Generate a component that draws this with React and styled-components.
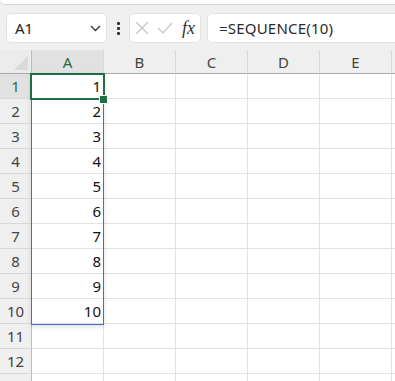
import styled, { createGlobalStyle } from 'styled-components'

const GlobalStyle = createGlobalStyle`
  html, body {
    margin: 0;
    background: #f0f0f0;
    font-family: "Noto Sans", "Noto Sans CJK JP", sans-serif;
    overflow: hidden;
  }
  * { box-sizing: border-box; }
`

const Page = styled.div`
  width: 395px;
  height: 381px;
  overflow: hidden;
  background: #f0f0f0;
`

const Ribbon = styled.div`
  height: 5px;
  background: #fff;
  border-bottom: 1px solid #d4d4d4;
  border-bottom-left-radius: 8px;
`

const FormulaBar = styled.div`
  display: flex;
  align-items: center;
  height: 30px;
  margin: 8px 0 7px 6px;
`

const Box = styled.div`
  height: 30px;
  background: #fff;
  border: 1px solid #e2e2e2;
  border-radius: 5px;
  display: flex;
  align-items: center;
`

const NameBox = styled(Box)`
  width: 101px;
  padding: 0 0 0 8px;
  justify-content: space-between;
  font-size: 15px;
  color: #222;
`

const Chevron = styled.svg`
  margin-right: 5px;
`

const Dots = styled.div`
  width: 22px;
  display: flex;
  flex-direction: column;
  align-items: center;
  gap: 2px;
  span {
    width: 3px;
    height: 3px;
    background: #333;
    border-radius: 1px;
  }
`

const FxBox = styled(Box)`
  width: 72px;
  padding-left: 5px;
  gap: 8px;
`

const Fx = styled.span`
  font-family: "Liberation Serif", serif;
  font-style: italic;
  font-size: 18px;
  color: #333;
  margin-left: 1px;
`

const FormulaInput = styled(Box)`
  flex: 1;
  margin-left: 6px;
  padding-left: 11px;
  border-right: none;
  border-top-right-radius: 0;
  border-bottom-right-radius: 0;
  font-size: 15px;
  color: #2b2b2b;
  letter-spacing: 0.2px;
`

const SheetWrap = styled.div`
  position: relative;
`

const Sheet = styled.div`
  display: grid;
  grid-template-columns: 32px repeat(6, 72px);
  grid-template-rows: 24px repeat(13, 25px);
  background: #fff;
`

const Corner = styled.div`
  background: #ececec;
  border-right: 1px solid #bdbdbd;
  border-bottom: 1px solid #a9a9a9;
  position: relative;
  &::after {
    content: "";
    position: absolute;
    right: 3px;
    bottom: 3px;
    border-left: 14px solid transparent;
    border-bottom: 14px solid #d9d9d9;
  }
`

const ColHead = styled.div`
  background: ${p => (p.$active ? '#e1e1e1' : '#efefef')};
  color: ${p => (p.$active ? '#1d6b40' : '#444')};
  border-right: 1px solid #d8d8d8;
  border-bottom: 1px solid #a9a9a9;
  display: flex;
  align-items: center;
  justify-content: center;
  font-size: 15px;
`

const RowHead = styled.div`
  background: ${p => (p.$active ? '#e1e1e1' : '#efefef')};
  color: ${p => (p.$active ? '#1d6b40' : '#444')};
  border-right: 1px solid #bdbdbd;
  border-bottom: 1px solid #d8d8d8;
  display: flex;
  align-items: center;
  justify-content: center;
  font-size: 15px;
`

const Cell = styled.div`
  border-right: 1px solid #e1e1e1;
  border-bottom: 1px solid #e1e1e1;
  display: flex;
  align-items: center;
  justify-content: flex-end;
  padding-right: 2px;
  font-size: 15px;
  color: #111;
`

const SpillRange = styled.div`
  position: absolute;
  left: 31px;
  top: 23px;
  width: 73px;
  height: 252px;
  border: 1px solid #3a6fd4;
  box-shadow: 0 2px 5px rgba(0, 0, 0, 0.12);
  pointer-events: none;
`

const ActiveCell = styled.div`
  position: absolute;
  left: 30px;
  top: 23px;
  width: 75px;
  height: 27px;
  border: 2px solid #1f6e43;
  pointer-events: none;
`

const FillHandle = styled.div`
  position: absolute;
  left: 100px;
  top: 46px;
  width: 7px;
  height: 7px;
  background: #1f6e43;
  outline: 1px solid #fff;
`

const columns = ['A', 'B', 'C', 'D', 'E', '']
const rows = Array.from({ length: 13 }, (_, i) => i + 1)

const App = () => {
  return (
    <Page>
      <GlobalStyle />
      <Ribbon />
      <FormulaBar>
        <NameBox>
          A1
          <Chevron width="11" height="7" viewBox="0 0 11 7">
            <path d="M1 1l4.5 4.5L10 1" fill="none" stroke="#333" strokeWidth="1.3" />
          </Chevron>
        </NameBox>
        <Dots><span /><span /><span /></Dots>
        <FxBox>
          <svg width="14" height="14" viewBox="0 0 14 14">
            <path d="M1 1l12 12M13 1L1 13" stroke="#c4c4c4" strokeWidth="1.2" />
          </svg>
          <svg width="16" height="14" viewBox="0 0 16 14">
            <path d="M1 7l5 5L15 2" fill="none" stroke="#c4c4c4" strokeWidth="1.2" />
          </svg>
          <Fx>fx</Fx>
        </FxBox>
        <FormulaInput>=SEQUENCE(10)</FormulaInput>
      </FormulaBar>
      <SheetWrap>
        <Sheet>
          <Corner />
          {columns.map((c, i) => (
            <ColHead key={i} $active={c === 'A'}>{c}</ColHead>
          ))}
          {rows.map(r => [
            <RowHead key={`h${r}`} $active={r === 1}>{r <= 12 ? r : ''}</RowHead>,
            ...columns.map((c, i) => (
              <Cell key={`${r}-${i}`}>{i === 0 && r <= 10 ? r : ''}</Cell>
            )),
          ])}
        </Sheet>
        <SpillRange />
        <ActiveCell />
        <FillHandle />
      </SheetWrap>
    </Page>
  )
}

export default App
